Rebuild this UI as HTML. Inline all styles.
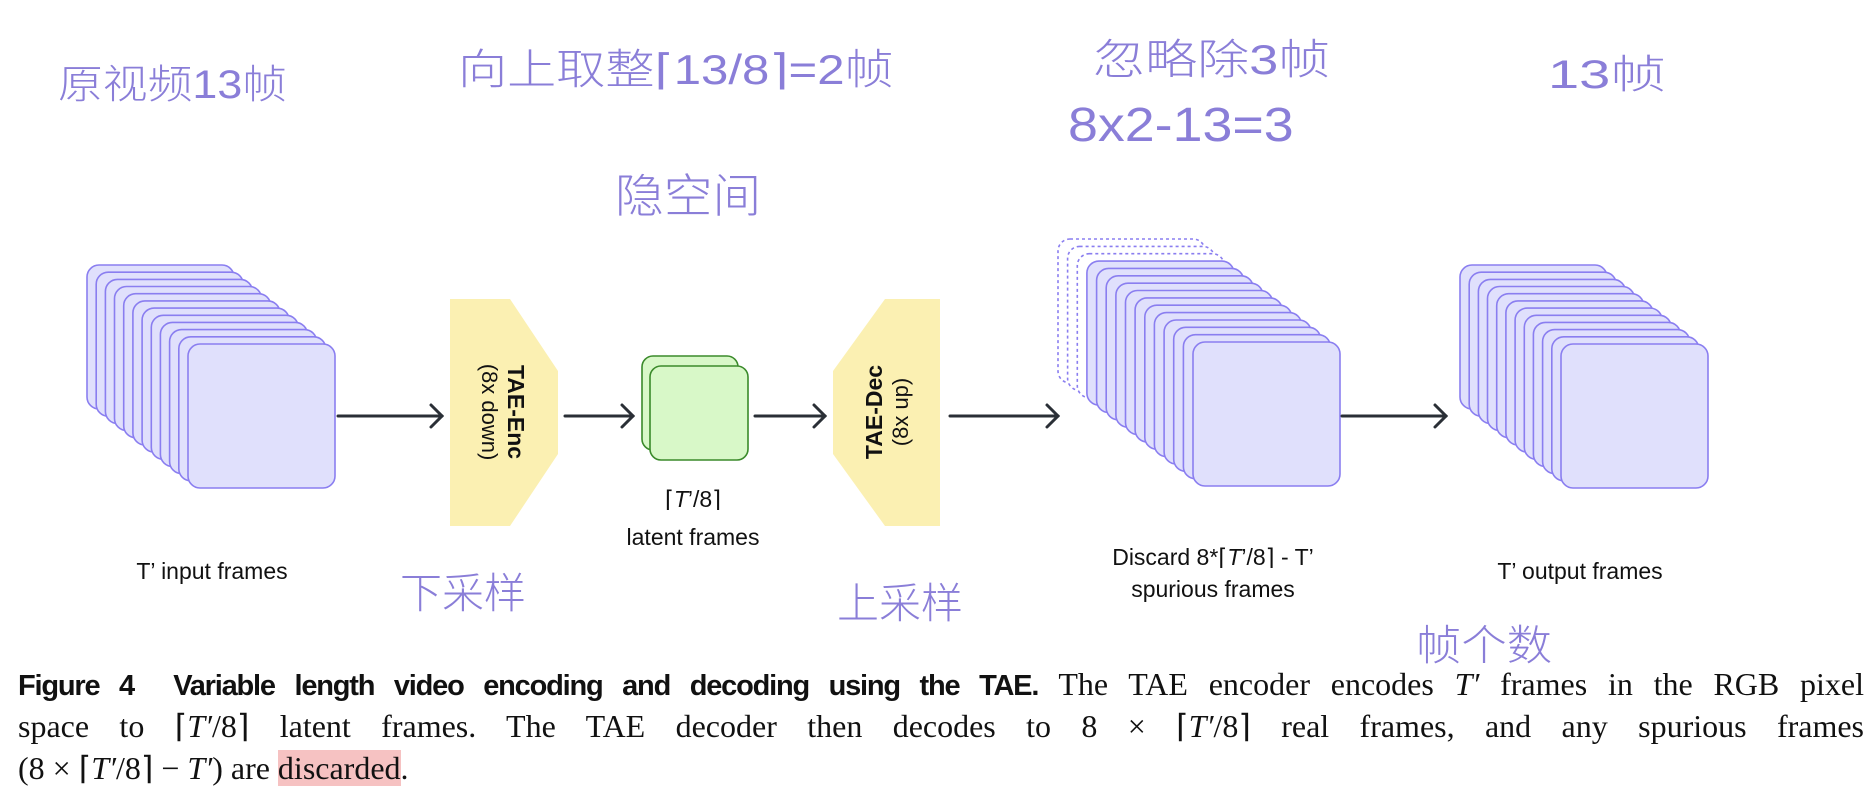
<!DOCTYPE html>
<html><head><meta charset="utf-8">
<style>
html,body{margin:0;padding:0;background:#fff;width:1874px;height:804px;overflow:hidden;position:relative}
.hw{position:absolute;font-family:"Liberation Sans","Noto Sans CJK SC",sans-serif;font-weight:300;color:#8a7ed8;white-space:nowrap;transform-origin:0 0}
.lbl{position:absolute;font-family:"Liberation Sans",sans-serif;font-size:23px;color:#111;text-align:center;white-space:nowrap;transform:translateX(-50%)}
.cap{position:absolute;left:18px;width:1846px;font-family:"Liberation Serif",serif;font-size:32px;color:#111;text-align:justify;text-align-last:justify;white-space:nowrap;line-height:40px}
.cap b{font-family:"Liberation Sans",sans-serif;font-weight:bold;letter-spacing:-1.2px;font-size:29px}
.hl{background:#f6c2c2}
</style></head><body>
<svg width="1874" height="804" style="position:absolute;left:0;top:0">
<g fill="#e0e0fc" stroke="#8a7ef0" stroke-width="1.6">
<rect x="87" y="265" width="147" height="144" rx="12"/>
<rect x="96.2" y="272.2" width="147" height="144" rx="12"/>
<rect x="105.4" y="279.4" width="147" height="144" rx="12"/>
<rect x="114.5" y="286.5" width="147" height="144" rx="12"/>
<rect x="123.7" y="293.7" width="147" height="144" rx="12"/>
<rect x="132.9" y="300.9" width="147" height="144" rx="12"/>
<rect x="142.1" y="308.1" width="147" height="144" rx="12"/>
<rect x="151.3" y="315.3" width="147" height="144" rx="12"/>
<rect x="160.4" y="322.4" width="147" height="144" rx="12"/>
<rect x="169.6" y="329.6" width="147" height="144" rx="12"/>
<rect x="178.8" y="336.8" width="147" height="144" rx="12"/>
<rect x="188" y="344" width="147" height="144" rx="12"/>

<rect x="1460" y="265" width="147" height="144" rx="12"/>
<rect x="1469.2" y="272.2" width="147" height="144" rx="12"/>
<rect x="1478.4" y="279.4" width="147" height="144" rx="12"/>
<rect x="1487.5" y="286.5" width="147" height="144" rx="12"/>
<rect x="1496.7" y="293.7" width="147" height="144" rx="12"/>
<rect x="1505.9" y="300.9" width="147" height="144" rx="12"/>
<rect x="1515.1" y="308.1" width="147" height="144" rx="12"/>
<rect x="1524.3" y="315.3" width="147" height="144" rx="12"/>
<rect x="1533.4" y="322.4" width="147" height="144" rx="12"/>
<rect x="1542.6" y="329.6" width="147" height="144" rx="12"/>
<rect x="1551.8" y="336.8" width="147" height="144" rx="12"/>
<rect x="1561" y="344" width="147" height="144" rx="12"/>
</g>
<g fill="#fff" stroke="#8a7ef0" stroke-width="1.6" stroke-dasharray="3,3">
<rect x="1058" y="239" width="147" height="144" rx="12"/>
<rect x="1067.6" y="246.4" width="147" height="144" rx="12"/>
<rect x="1077.3" y="253.7" width="147" height="144" rx="12"/>
</g>
<g fill="#e0e0fc" stroke="#8a7ef0" stroke-width="1.6">
<rect x="1086.9" y="261.1" width="147" height="144" rx="12"/>
<rect x="1096.6" y="268.4" width="147" height="144" rx="12"/>
<rect x="1106.2" y="275.8" width="147" height="144" rx="12"/>
<rect x="1115.9" y="283.2" width="147" height="144" rx="12"/>
<rect x="1125.5" y="290.5" width="147" height="144" rx="12"/>
<rect x="1135.1" y="297.9" width="147" height="144" rx="12"/>
<rect x="1144.8" y="305.2" width="147" height="144" rx="12"/>
<rect x="1154.4" y="312.6" width="147" height="144" rx="12"/>
<rect x="1164.1" y="320" width="147" height="144" rx="12"/>
<rect x="1173.7" y="327.3" width="147" height="144" rx="12"/>
<rect x="1183.4" y="334.7" width="147" height="144" rx="12"/>
<rect x="1193" y="342" width="147" height="144" rx="12"/>
</g>
<polygon points="450,299 510,299 558,371 558,454 510,526 450,526" fill="#fbf0b2"/>
<polygon points="885,299 940,299 940,526 885,526 833,454 833,371" fill="#fbf0b2"/>
<text transform="translate(508,412) rotate(90)" text-anchor="middle" font-family="Liberation Sans,sans-serif" font-weight="bold" font-size="23" fill="#111">TAE-Enc</text>
<text transform="translate(482,412) rotate(90)" text-anchor="middle" font-family="Liberation Sans,sans-serif" font-size="22" fill="#111">(8x down)</text>
<text transform="translate(882,412) rotate(-90)" text-anchor="middle" font-family="Liberation Sans,sans-serif" font-weight="bold" font-size="23" fill="#111">TAE-Dec</text>
<text transform="translate(908,412) rotate(-90)" text-anchor="middle" font-family="Liberation Sans,sans-serif" font-size="22" fill="#111">(8x up)</text>
<rect x="642" y="356" width="96" height="94" rx="11" fill="#d8f8c8" stroke="#3a8a2a" stroke-width="1.6"/>
<rect x="650" y="366" width="98" height="94" rx="11" fill="#d8f8c8" stroke="#3a8a2a" stroke-width="1.6"/>
<g stroke="#2a2f36" stroke-width="3" fill="none" stroke-linecap="round">
<line x1="338" y1="416" x2="442" y2="416"/><polyline points="431,405 442,416 431,427"/>
<line x1="565" y1="416" x2="633" y2="416"/><polyline points="622,405 633,416 622,427"/>
<line x1="755" y1="416" x2="825" y2="416"/><polyline points="814,405 825,416 814,427"/>
<line x1="950" y1="416" x2="1058" y2="416"/><polyline points="1047,405 1058,416 1047,427"/>
<line x1="1342" y1="416" x2="1446" y2="416"/><polyline points="1435,405 1446,416 1435,427"/>
</g>
</svg>

<div class="lbl" style="left:212px;top:558px">T’ input frames</div>
<div class="lbl" style="left:693px;top:486px">⌈<i>T</i>’/8⌉</div>
<div class="lbl" style="left:693px;top:524px">latent frames</div>
<div class="lbl" style="left:1213px;top:544px">Discard 8*⌈<i>T</i>’/8⌉ - T’</div>
<div class="lbl" style="left:1213px;top:576px">spurious frames</div>
<div class="lbl" style="left:1580px;top:558px">T’ output frames</div>

<div class="hw" style="left:58px;top:52px;font-size:40px;transform:scaleX(1.12)">原视频13帧</div>
<div class="hw" style="left:458px;top:36px;font-size:42px;transform:scaleX(1.17)">向上取整⌈13/8⌉=2帧</div>
<div class="hw" style="left:1093px;top:26px;font-size:42px;transform:scaleX(1.24)">忽略除3帧</div>
<div class="hw" style="left:1068px;top:98px;font-size:48px;transform:scaleX(1.12)">8x2-13=3</div>
<div class="hw" style="left:1548px;top:42px;font-size:40px;transform:scaleX(1.4)">13帧</div>
<div class="hw" style="left:615px;top:160px;font-size:46px;transform:scaleX(1.06)">隐空间</div>
<div class="hw" style="left:400px;top:560px;font-size:42px">下采样</div>
<div class="hw" style="left:837px;top:570px;font-size:42px">上采样</div>
<div class="hw" style="left:1416px;top:612px;font-size:42px;transform:scaleX(1.08)">帧个数</div>

<div class="cap" style="top:664px"><b>Figure 4&nbsp; Variable length video encoding and decoding using the TAE.</b> The TAE encoder encodes <i>T′</i> frames in the RGB pixel</div>
<div class="cap" style="top:706px">space to ⌈<i>T′</i>/8⌉ latent frames. The TAE decoder then decodes to 8 × ⌈<i>T′</i>/8⌉ real frames, and any spurious frames</div>
<div class="cap" style="top:748px;text-align:left;text-align-last:left">(8 × ⌈<i>T′</i>/8⌉ − <i>T′</i>) are <span class="hl">discarded</span>.</div>
</body></html>
